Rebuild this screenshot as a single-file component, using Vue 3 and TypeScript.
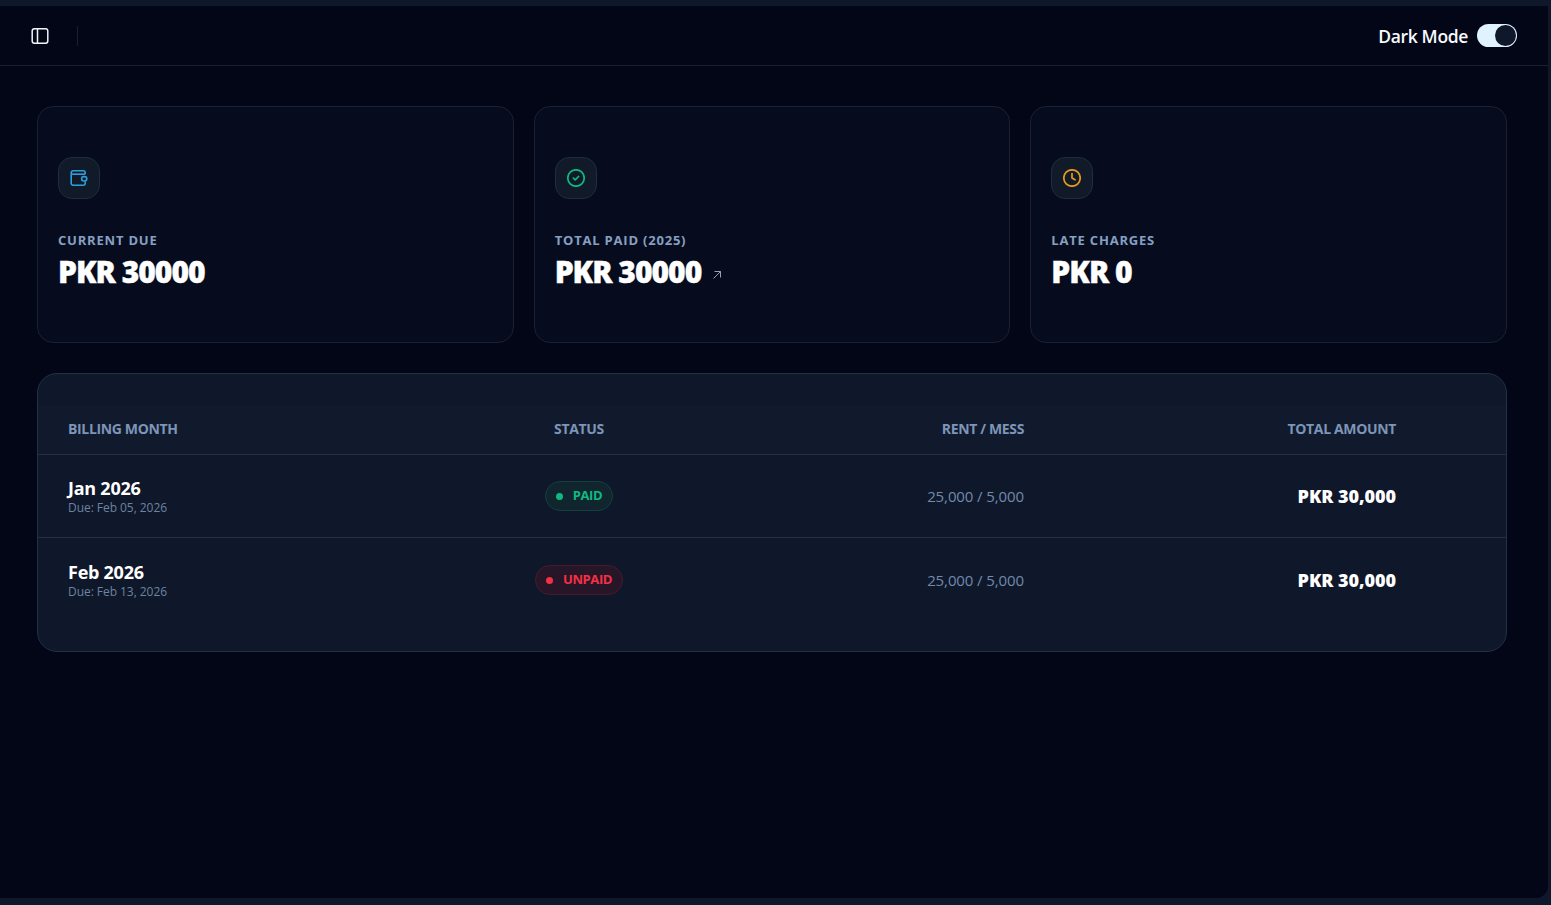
<script setup lang="ts">
interface Bill {
  month: string;
  due: string;
  paid: boolean;
  split: string;
  total: string;
}

const bills: Bill[] = [
  { month: "Jan 2026", due: "Due: Feb 05, 2026", paid: true, split: "25,000 / 5,000", total: "PKR 30,000" },
  { month: "Feb 2026", due: "Due: Feb 13, 2026", paid: false, split: "25,000 / 5,000", total: "PKR 30,000" },
];
</script>

<template>
  <div class="shell">
    <div class="inset">
      <header class="topbar">
        <div class="topbar-left">
          <svg class="side-icon" width="18" height="18" viewBox="0 0 18 18" fill="none" stroke="#f1f5f9" stroke-width="1.5">
            <rect x="1.2" y="1.8" width="15.6" height="14.4" rx="2.2" />
            <path d="M6.5 1.8v14.4" />
          </svg>
          <span class="bar-sep"></span>
        </div>
        <div class="topbar-right">
          <span class="mode-label">Dark Mode</span>
          <span class="toggle"><span class="knob"></span></span>
        </div>
      </header>

      <main class="content">
        <section class="cards">
          <article class="card">
            <span class="card-icon">
              <svg width="18" height="18" viewBox="0 0 18 18" fill="none" stroke="#2f9fdb" stroke-width="1.6" stroke-linejoin="round">
                <path d="M15.2 5.2V3.8a2 2 0 0 0-2-2H3.2a2 2 0 0 0-2 2v10.4a2 2 0 0 0 2 2h10.4a1.6 1.6 0 0 0 1.6-1.6v-2" />
                <path d="M1.2 5.2h14" />
                <rect x="11.6" y="7.6" width="5.2" height="4.4" rx="2.2" />
              </svg>
            </span>
            <div class="card-label">CURRENT DUE</div>
            <div class="card-value">PKR 30000</div>
          </article>
          <article class="card">
            <span class="card-icon">
              <svg width="18" height="18" viewBox="0 0 18 18" fill="none" stroke="#10b981" stroke-width="1.7" stroke-linecap="round" stroke-linejoin="round">
                <circle cx="9" cy="9" r="8.2" />
                <path d="M6.4 9.2l1.8 1.7 3.4-3.4" />
              </svg>
            </span>
            <div class="card-label">TOTAL PAID (2025)</div>
            <div class="card-value">PKR 30000
              <svg class="arrow" width="10" height="10" viewBox="0 0 10 10" fill="none" stroke="#94a3b8" stroke-width="1">
                <path d="M1.5 8.5l7-7M2.5 1.5h6v6" />
              </svg>
            </div>
          </article>
          <article class="card">
            <span class="card-icon">
              <svg width="18" height="18" viewBox="0 0 18 18" fill="none" stroke="#e69a1c" stroke-width="1.7" stroke-linecap="round" stroke-linejoin="round">
                <circle cx="9" cy="9" r="8.2" />
                <path d="M9 4.6V9l3 1.8" />
              </svg>
            </span>
            <div class="card-label">LATE CHARGES</div>
            <div class="card-value">PKR 0</div>
          </article>
        </section>

        <section class="table-card">
          <div class="row head">
            <div>BILLING MONTH</div>
            <div class="center">STATUS</div>
            <div class="right">RENT / MESS</div>
            <div class="right">TOTAL AMOUNT</div>
          </div>
          <div v-for="bill in bills" :key="bill.month" class="row bill">
            <div class="period">
              <div class="month">{{ bill.month }}</div>
              <div class="due">{{ bill.due }}</div>
            </div>
            <div class="center">
              <span class="badge" :class="bill.paid ? 'paid' : 'unpaid'">
                <i class="dot"></i>{{ bill.paid ? "PAID" : "UNPAID" }}
              </span>
            </div>
            <div class="right split">{{ bill.split }}</div>
            <div class="right total">{{ bill.total }}</div>
          </div>
        </section>
      </main>
    </div>
  </div>
</template>

<style>
html,
body {
  margin: 0;
  background: #0f172a;
}
</style>

<style scoped>
.shell {
  width: 1551px;
  height: 905px;
  box-sizing: border-box;
  padding: 6px 3px 7px 0;
  background: #0f172a;
  font-family: "Open Sans", "Noto Sans", sans-serif;
  overflow: hidden;
}

.inset {
  height: 100%;
  background: #020617;
  border-radius: 0 0 12px 0;
}

.topbar {
  height: 60px;
  box-sizing: border-box;
  padding: 0 31px;
  display: flex;
  align-items: center;
  justify-content: space-between;
  border-bottom: 1px solid #1a2030;
}

.topbar-left {
  display: flex;
  align-items: center;
}

.side-icon {
  display: block;
}

.bar-sep {
  width: 1px;
  height: 20px;
  margin-left: 28px;
  background: #1a2030;
}

.topbar-right {
  display: flex;
  align-items: center;
  gap: 9px;
}

.mode-label {
  color: #f8fafc;
  font-size: 17.5px;
  font-weight: 600;
  letter-spacing: -0.35px;
}

.toggle {
  width: 40px;
  height: 23px;
  box-sizing: border-box;
  padding: 1px;
  border-radius: 12px;
  background: #e0f2fe;
  display: flex;
  justify-content: flex-end;
}

.knob {
  width: 21px;
  height: 21px;
  border-radius: 50%;
  background: #0f172a;
}

.content {
  padding: 40px 41px 0 37px;
}

.cards {
  display: grid;
  grid-template-columns: repeat(3, 1fr);
  gap: 20px;
}

.card {
  height: 237px;
  box-sizing: border-box;
  padding: 50px 20px 0;
  background: #060c1d;
  border: 1px solid #1a2132;
  border-radius: 16px;
}

.card-icon {
  width: 42px;
  height: 42px;
  box-sizing: border-box;
  display: flex;
  align-items: center;
  justify-content: center;
  background: #111a28;
  border: 1px solid #222c3c;
  border-radius: 14px;
}

.card-label {
  margin-top: 31px;
  color: #86a0c2;
  font-size: 13px;
  line-height: 20px;
  font-weight: 700;
  letter-spacing: 0.8px;
}

.card-value {
  margin-top: 4px;
  color: #fff;
  font-size: 30px;
  line-height: 36px;
  font-weight: 800;
  letter-spacing: -1px;
  white-space: nowrap;
  -webkit-text-stroke: 0.4px #fff;
}

.arrow {
  margin-left: 4px;
  vertical-align: 3px;
}

.table-card {
  margin-top: 30px;
  height: 279px;
  box-sizing: border-box;
  padding-top: 31px;
  background: #0f172a;
  border: 1px solid #253042;
  border-radius: 20px;
}

.row {
  display: grid;
  grid-template-columns: 400px 222px 334px 372px;
  padding-left: 30px;
  align-items: center;
  border-bottom: 1px solid #253042;
}

.row:last-child {
  height: 84px;
  border-bottom: 0;
}

.head {
  height: 47px;
  padding-bottom: 2px;
  color: #7c95b8;
  font-size: 14px;
  font-weight: 700;
  letter-spacing: -0.35px;
  background: #111a2c;
}

.bill {
  height: 82px;
}

.period {
  padding-top: 2px;
}

.center {
  text-align: center;
}

.right {
  text-align: right;
}

.month {
  color: #fff;
  font-size: 18px;
  line-height: 20px;
  font-weight: 700;
  letter-spacing: -0.25px;
}

.due {
  margin-top: 1px;
  color: #6d83a0;
  font-size: 12px;
  line-height: 17px;
  letter-spacing: -0.05px;
}

.badge {
  display: inline-flex;
  align-items: center;
  height: 30px;
  box-sizing: border-box;
  padding: 0 10px 2px;
  gap: 10px;
  border-radius: 15px;
  font-size: 13px;
  font-weight: 700;
  letter-spacing: -0.4px;
}

.dot {
  width: 7px;
  height: 7px;
  margin-top: 2px;
  border-radius: 50%;
  background: currentColor;
}

.paid {
  color: #10b981;
  background: #10252d;
  border: 1px solid #124040;
}

.unpaid {
  color: #f43045;
  background: #271627;
  border: 1px solid #4a1a2c;
}

.split {
  color: #7189ab;
  font-size: 15px;
  letter-spacing: -0.1px;
}

.total {
  color: #fff;
  font-size: 18px;
  font-weight: 800;
  letter-spacing: -0.05px;
}
</style>
